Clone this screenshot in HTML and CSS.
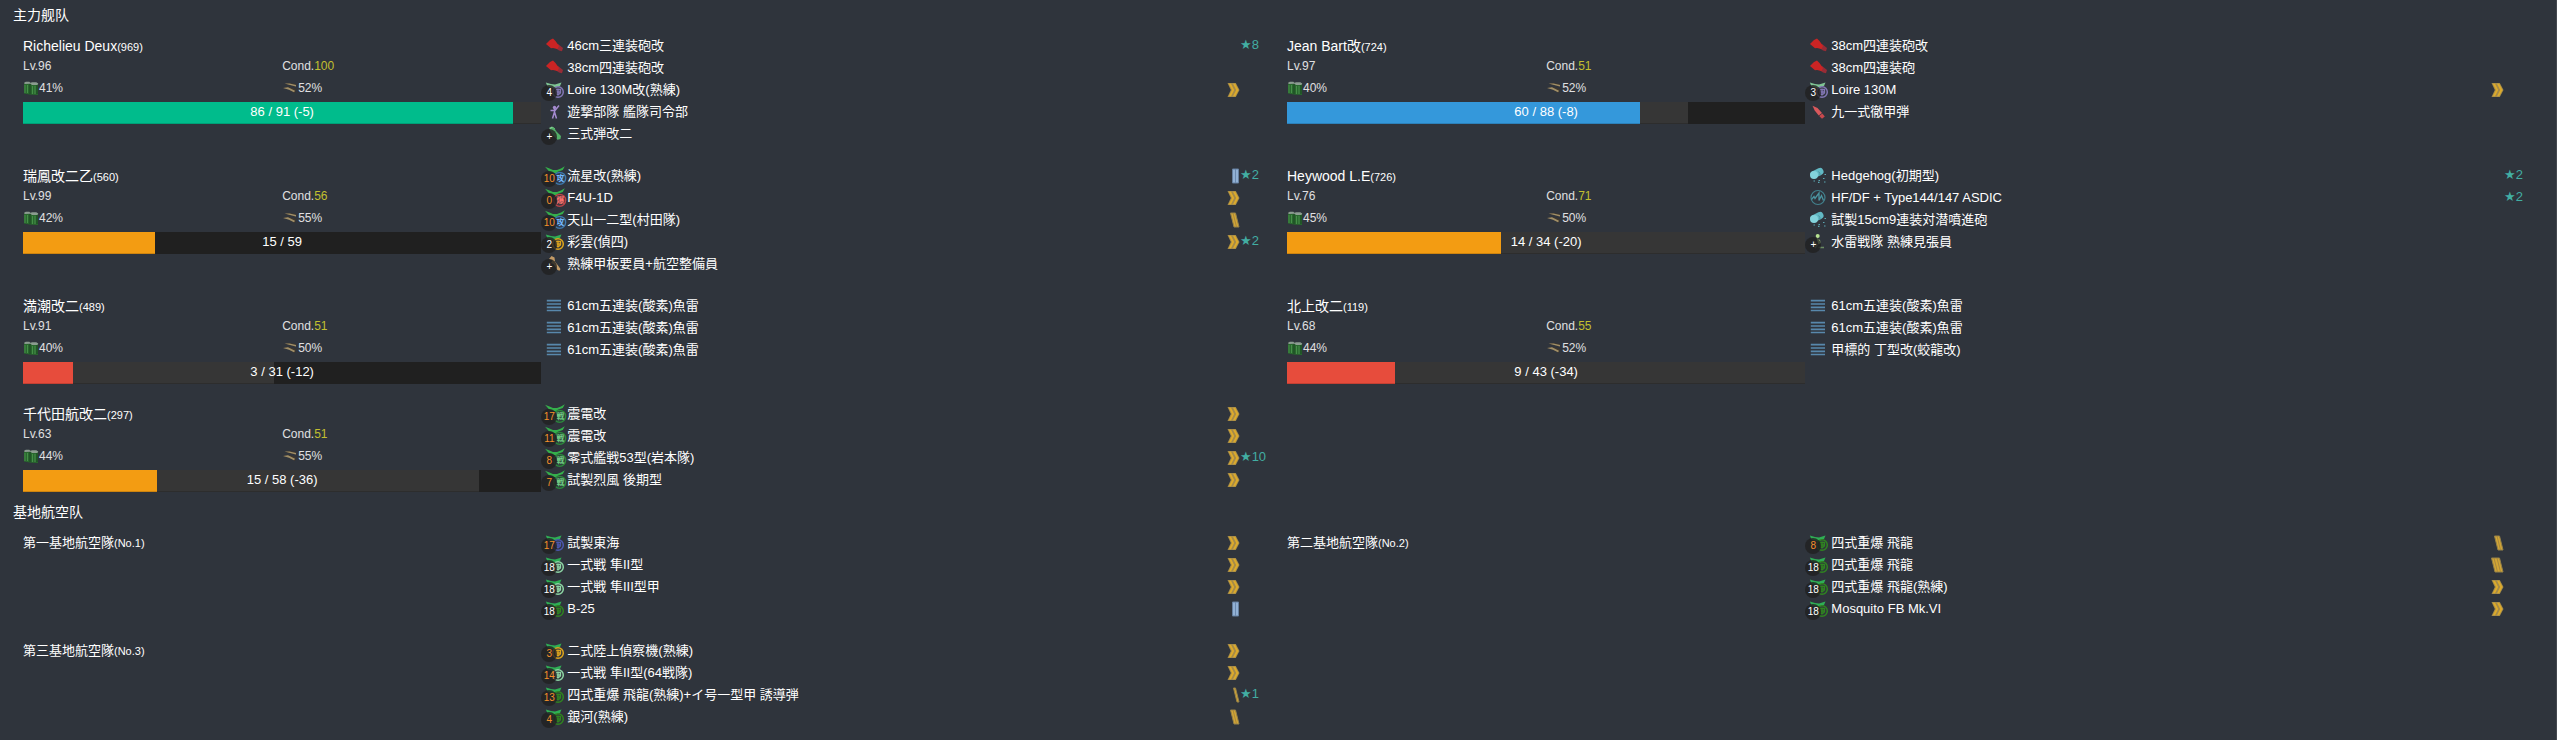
FILE: index.html
```html
<!DOCTYPE html>
<html lang="ja">
<head>
<meta charset="utf-8">
<meta name="viewport" content="width=device-width, initial-scale=1">
<title>主力舰队</title>
<link rel="stylesheet" href="styles.css">
</head>
<body>
<svg class="sprite" aria-hidden="true">
  <symbol id="gun" viewBox="0 0 20 20"><path d="M9 11l5 3.500 3 .7 1-3.200-5-4z" fill="#962c36"/><path d="M1 8l4-4 3-1.500 2.500 2.500 3.500 5-1.500 3L8 12l-2 .3z" fill="#cb2424"/></symbol>
  <symbol id="command" viewBox="0 0 20 20"><circle cx="9.500" cy="5.500" r="1.700" fill="#a58bd0"/><path d="M9.500 7v4M5.500 8.500H10L14 3.500M9.500 10l-2 6.500M9.500 10l2 6.500" fill="none" stroke="#a58bd0" stroke-width="1.500"/></symbol>
  <symbol id="shell" viewBox="0 0 20 20"><path d="M4 4l3-1.500 3 2-1.500 4z" fill="#83cf92"/><path d="M4.500 5.500l4-2.500 3 4.500 4.500 4.500-.5 3-3 .8-5-5z" fill="#54b068"/></symbol>
  <symbol id="ap" viewBox="0 0 20 20"><path d="M3.500 3.800l5 2.200 4.500 5-3.300 2.500-4-5z" fill="#d9585c"/><path d="M13.300 11.400l2.500 3-2.800 2.300-2.800-2.600z" fill="#c8484d"/></symbol>
  <symbol id="crew" viewBox="0 0 20 20"><path d="M4 5l2.500-3 3 1.500.5 4 3 4 2.500 3.500-1 1.700-2-.7-4-6-2.500-1 1.500-2.500z" fill="#c29a66"/></symbol>
  <symbol id="asw" viewBox="0 0 20 20"><path d="M5 8.500l6-3" stroke="#62b9c4" stroke-width="7" stroke-linecap="round"/><circle cx="5" cy="9" r="4" fill="#83d3dc"/><path d="M9.500 5.500a4 4 0 0 1 1.500 4" fill="none" stroke="#4a94a0"/><path d="M15.500 8.500h1.500M14 12.500h1.500M9.500 14.500H11M4.500 15h1.500M9 16.300h1.500M15 16h1.500" stroke="#5ba6b2" stroke-width="1.200"/></symbol>
  <symbol id="sonar" viewBox="0 0 20 20"><circle cx="9" cy="9.500" r="7" fill="none" stroke="#42818d" stroke-width="1.200"/><path d="M2.500 11.500L5 8.500l1 2L10 5v7.500l2.500-5 2 5" fill="none" stroke="#4b95a1" stroke-width="1.300"/></symbol>
  <symbol id="lookout" viewBox="0 0 20 20"><circle cx="8.700" cy="4" r="2" fill="#b7e391"/><path d="M7.500 6l3.500 2 .5 3-2 1.500z" fill="#b7e391"/><path d="M5 10l3 3-2 3M9.500 15.500H15" stroke="#6b8b63" stroke-width="1.500" fill="none"/></symbol>
  <symbol id="torpedo" viewBox="0 0 20 20"><path d="M1.800 4.700h14.200M1.800 8h14.200M1.800 11.300h14.200M1.800 14.500h14.200" stroke="#5888ac" stroke-width="1.700"/></symbol>
  <symbol id="landwing" viewBox="0 0 20 20"><path d="M.8 2.500L6 4l4 .5 6.500-2-1.500 3.500-4 1.500-2 1.200-3-1.200-3.500-1z" fill="currentColor"/></symbol>
  <symbol id="land" viewBox="0 0 20 20"><circle cx="13" cy="12" r="5.300" fill="none" stroke="currentColor" stroke-width="1.500"/><path d="M11 9.500h4.500v3.500L13 15l-2-1.500zM13 8.500V15M11 12h4" fill="none" stroke="currentColor" stroke-width="1.300"/></symbol>
  <symbol id="carrier" viewBox="0 0 22 20"><path d="M0 .8l4.500 1.700 3.500 1.500h4L16 2.500 19.800.3l-2 3.700-5 1.700-2 1.800L8 6.500 4 5.200z" fill="#35b04c"/><circle cx="14.700" cy="12.300" r="6" fill="currentColor" fill-opacity=".15" stroke="currentColor" stroke-width="1.300"/></symbol>
  <symbol id="p7" viewBox="0 0 14 16"><path d="M1.500 1H9.800L13.500 8 9.800 15H1.500L4.800 8z" fill="#a58b49"/><path d="M2.800 1.800h2.200L8.200 8 5 14.200H2.800L6 8zM7 1.800h2.200L12.500 8 9.200 14.200H7L10.200 8z" fill="#dcaa2c"/></symbol>
  <symbol id="p6" viewBox="0 0 14 16"><path d="M1.500 1h8L13 15H5z" fill="#d2a535" stroke="#968148"/><path d="M4 1l3.500 14M7 1l3.500 14" stroke="#a8883c"/></symbol>
  <symbol id="p5" viewBox="0 0 14 16"><path d="M4.500 1h5L13 15H8z" fill="#d2a535" stroke="#968148"/><path d="M7 1l3.500 14" stroke="#a8883c"/></symbol>
  <symbol id="p4" viewBox="0 0 14 16"><path d="M7.500 1h2L13 15h-2z" fill="#d2a535" stroke="#968148"/></symbol>
  <symbol id="p2" viewBox="0 0 14 16"><path d="M6.500 1h6v14h-6z" fill="#92b1d5" stroke="#657f9f"/><path d="M9.500 1v14" stroke="#6b89ae"/></symbol>
  <symbol id="fuel" viewBox="0 0 16 14"><path d="M1 2.500v10l4 .8 4 .4 6 .2V3z" fill="#28702c"/><path d="M2 4v8M4.500 4v8M9.500 5v8M12 5v8" stroke="#4aa04b"/><path d="M7 3v10M14 4v9" stroke="#174b1d"/><path d="M.8 2l2-1.200h3.500l1 1 2-.6h4l2 1.300-1 1.500H9L7.500 2.800 2 3z" fill="#9caf9f"/></symbol>
  <symbol id="ammo" viewBox="0 0 16 14"><path d="M1 7l5 1 7 4 1-4-7-2zM3 3l4-1 7 1v3L8 4z" fill="#43382a"/><path d="M1 7l5-.7 7 3.500-1 1.500-5-2.500zM2.500 2.500h5L14 4v1.500L8 4z" fill="#b5a070"/></symbol>
</svg>
<main class="page">
<section>
  <h2 class="title">主力舰队</h2>
  <div class="fleet">
    <article class="card">
      <div class="info">
        <h3 class="name">Richelieu Deux<small>(969)</small></h3>
        <div class="stats"><span>Lv.96</span><span>Cond.<b>100</b></span><span class="supply"><svg><use href="#fuel"/></svg>41%</span><span class="supply"><svg><use href="#ammo"/></svg>52%</span></div>
        <div class="hp"><i class="green" style="width:94.5%"></i><i class="lost" style="width:5.5%"></i><span>86 / 91 (-5)</span></div>
      </div>
      <ul class="equips">
        <li><span class="icon"><svg><use href="#gun"/></svg></span><span class="item">46cm三連装砲改</span><span class="star">★8</span></li>
        <li><span class="icon"><svg><use href="#gun"/></svg></span><span class="item">38cm四連装砲改</span></li>
        <li><span class="icon seaplane"><svg><use class="seawing" href="#landwing"/><use href="#land"/></svg><em class="full">4</em></span><span class="item">Loire 130M改(熟練)</span><svg class="rank"><use href="#p7"/></svg></li>
        <li><span class="icon"><svg><use href="#command"/></svg></span><span class="item">遊撃部隊 艦隊司令部</span></li>
        <li><span class="icon"><svg><use href="#shell"/></svg><em class="full">+</em></span><span class="item">三式弾改二</span></li>
      </ul>
    </article>
    <article class="card">
      <div class="info">
        <h3 class="name">Jean Bart改<small>(724)</small></h3>
        <div class="stats"><span>Lv.97</span><span>Cond.<b>51</b></span><span class="supply"><svg><use href="#fuel"/></svg>40%</span><span class="supply"><svg><use href="#ammo"/></svg>52%</span></div>
        <div class="hp"><i class="blue" style="width:68.2%"></i><i class="lost" style="width:9.1%"></i><span>60 / 88 (-8)</span></div>
      </div>
      <ul class="equips">
        <li><span class="icon"><svg><use href="#gun"/></svg></span><span class="item">38cm四連装砲改</span></li>
        <li><span class="icon"><svg><use href="#gun"/></svg></span><span class="item">38cm四連装砲</span></li>
        <li><span class="icon seaplane"><svg><use class="seawing" href="#landwing"/><use href="#land"/></svg><em class="full">3</em></span><span class="item">Loire 130M</span><svg class="rank"><use href="#p7"/></svg></li>
        <li><span class="icon"><svg><use href="#ap"/></svg></span><span class="item">九一式徹甲弾</span></li>
      </ul>
    </article>
    <article class="card">
      <div class="info">
        <h3 class="name">瑞鳳改二乙<small>(560)</small></h3>
        <div class="stats"><span>Lv.99</span><span>Cond.<b>56</b></span><span class="supply"><svg><use href="#fuel"/></svg>42%</span><span class="supply"><svg><use href="#ammo"/></svg>55%</span></div>
        <div class="hp"><i class="orange" style="width:25.4%"></i><span>15 / 59</span></div>
      </div>
      <ul class="equips">
        <li><span class="icon attacker"><svg class="wide"><use href="#carrier"/></svg><b class="kind">攻</b><em>10</em></span><span class="item">流星改(熟練)</span><svg class="rank"><use href="#p2"/></svg><span class="star">★2</span></li>
        <li><span class="icon bomber"><svg class="wide"><use href="#carrier"/></svg><b class="kind">爆</b><em>0</em></span><span class="item">F4U-1D</span><svg class="rank"><use href="#p7"/></svg></li>
        <li><span class="icon attacker"><svg class="wide"><use href="#carrier"/></svg><b class="kind">攻</b><em>10</em></span><span class="item">天山一二型(村田隊)</span><svg class="rank"><use href="#p5"/></svg></li>
        <li><span class="icon recon"><svg><use class="wing" href="#landwing"/><use href="#land"/></svg><em class="full">2</em></span><span class="item">彩雲(偵四)</span><svg class="rank"><use href="#p7"/></svg><span class="star">★2</span></li>
        <li><span class="icon"><svg><use href="#crew"/></svg><em class="full">+</em></span><span class="item">熟練甲板要員+航空整備員</span></li>
      </ul>
    </article>
    <article class="card">
      <div class="info">
        <h3 class="name">Heywood L.E<small>(726)</small></h3>
        <div class="stats"><span>Lv.76</span><span>Cond.<b>71</b></span><span class="supply"><svg><use href="#fuel"/></svg>45%</span><span class="supply"><svg><use href="#ammo"/></svg>50%</span></div>
        <div class="hp"><i class="orange" style="width:41.2%"></i><i class="lost" style="width:58.8%"></i><span>14 / 34 (-20)</span></div>
      </div>
      <ul class="equips">
        <li><span class="icon"><svg><use href="#asw"/></svg></span><span class="item">Hedgehog(初期型)</span><span class="star">★2</span></li>
        <li><span class="icon"><svg><use href="#sonar"/></svg></span><span class="item">HF/DF + Type144/147 ASDIC</span><span class="star">★2</span></li>
        <li><span class="icon"><svg><use href="#asw"/></svg></span><span class="item">試製15cm9連装対潜噴進砲</span></li>
        <li><span class="icon"><svg><use href="#lookout"/></svg><em class="full">+</em></span><span class="item">水雷戦隊 熟練見張員</span></li>
      </ul>
    </article>
    <article class="card">
      <div class="info">
        <h3 class="name">満潮改二<small>(489)</small></h3>
        <div class="stats"><span>Lv.91</span><span>Cond.<b>51</b></span><span class="supply"><svg><use href="#fuel"/></svg>40%</span><span class="supply"><svg><use href="#ammo"/></svg>50%</span></div>
        <div class="hp"><i class="red" style="width:9.7%"></i><i class="lost" style="width:38.7%"></i><span>3 / 31 (-12)</span></div>
      </div>
      <ul class="equips">
        <li><span class="icon"><svg><use href="#torpedo"/></svg></span><span class="item">61cm五連装(酸素)魚雷</span></li>
        <li><span class="icon"><svg><use href="#torpedo"/></svg></span><span class="item">61cm五連装(酸素)魚雷</span></li>
        <li><span class="icon"><svg><use href="#torpedo"/></svg></span><span class="item">61cm五連装(酸素)魚雷</span></li>
      </ul>
    </article>
    <article class="card">
      <div class="info">
        <h3 class="name">北上改二<small>(119)</small></h3>
        <div class="stats"><span>Lv.68</span><span>Cond.<b>55</b></span><span class="supply"><svg><use href="#fuel"/></svg>44%</span><span class="supply"><svg><use href="#ammo"/></svg>52%</span></div>
        <div class="hp"><i class="red" style="width:20.9%"></i><i class="lost" style="width:79.1%"></i><span>9 / 43 (-34)</span></div>
      </div>
      <ul class="equips">
        <li><span class="icon"><svg><use href="#torpedo"/></svg></span><span class="item">61cm五連装(酸素)魚雷</span></li>
        <li><span class="icon"><svg><use href="#torpedo"/></svg></span><span class="item">61cm五連装(酸素)魚雷</span></li>
        <li><span class="icon"><svg><use href="#torpedo"/></svg></span><span class="item">甲標的 丁型改(蛟龍改)</span></li>
      </ul>
    </article>
    <article class="card">
      <div class="info">
        <h3 class="name">千代田航改二<small>(297)</small></h3>
        <div class="stats"><span>Lv.63</span><span>Cond.<b>51</b></span><span class="supply"><svg><use href="#fuel"/></svg>44%</span><span class="supply"><svg><use href="#ammo"/></svg>55%</span></div>
        <div class="hp"><i class="orange" style="width:25.9%"></i><i class="lost" style="width:62.1%"></i><span>15 / 58 (-36)</span></div>
      </div>
      <ul class="equips">
        <li><span class="icon fighter"><svg class="wide"><use href="#carrier"/></svg><b class="kind">戦</b><em>17</em></span><span class="item">震電改</span><svg class="rank"><use href="#p7"/></svg></li>
        <li><span class="icon fighter"><svg class="wide"><use href="#carrier"/></svg><b class="kind">戦</b><em>11</em></span><span class="item">震電改</span><svg class="rank"><use href="#p7"/></svg></li>
        <li><span class="icon fighter"><svg class="wide"><use href="#carrier"/></svg><b class="kind">戦</b><em>8</em></span><span class="item">零式艦戦53型(岩本隊)</span><svg class="rank"><use href="#p7"/></svg><span class="star">★10</span></li>
        <li><span class="icon fighter"><svg class="wide"><use href="#carrier"/></svg><b class="kind">戦</b><em>7</em></span><span class="item">試製烈風 後期型</span><svg class="rank"><use href="#p7"/></svg></li>
      </ul>
    </article>
  </div>
</section>
<section>
  <h2 class="title">基地航空队</h2>
  <div class="fleet">
    <article class="card">
      <h3 class="name base">第一基地航空隊<small>(No.1)</small></h3>
      <ul class="equips">
        <li><span class="icon patrol"><svg><use class="wing" href="#landwing"/><use href="#land"/></svg><em>17</em></span><span class="item">試製東海</span><svg class="rank"><use href="#p7"/></svg></li>
        <li><span class="icon army"><svg><use class="wing" href="#landwing"/><use href="#land"/></svg><em class="full">18</em></span><span class="item">一式戦 隼II型</span><svg class="rank"><use href="#p7"/></svg></li>
        <li><span class="icon army"><svg><use class="wing" href="#landwing"/><use href="#land"/></svg><em class="full">18</em></span><span class="item">一式戦 隼III型甲</span><svg class="rank"><use href="#p7"/></svg></li>
        <li><span class="icon heavy"><svg><use class="wing" href="#landwing"/><use href="#land"/></svg><em class="full">18</em></span><span class="item">B-25</span><svg class="rank"><use href="#p2"/></svg></li>
      </ul>
    </article>
    <article class="card">
      <h3 class="name base">第二基地航空隊<small>(No.2)</small></h3>
      <ul class="equips">
        <li><span class="icon heavy"><svg><use class="wing" href="#landwing"/><use href="#land"/></svg><em>8</em></span><span class="item">四式重爆 飛龍</span><svg class="rank"><use href="#p5"/></svg></li>
        <li><span class="icon heavy"><svg><use class="wing" href="#landwing"/><use href="#land"/></svg><em class="full">18</em></span><span class="item">四式重爆 飛龍</span><svg class="rank"><use href="#p6"/></svg></li>
        <li><span class="icon heavy"><svg><use class="wing" href="#landwing"/><use href="#land"/></svg><em class="full">18</em></span><span class="item">四式重爆 飛龍(熟練)</span><svg class="rank"><use href="#p7"/></svg></li>
        <li><span class="icon heavy"><svg><use class="wing" href="#landwing"/><use href="#land"/></svg><em class="full">18</em></span><span class="item">Mosquito FB Mk.VI</span><svg class="rank"><use href="#p7"/></svg></li>
      </ul>
    </article>
    <article class="card">
      <h3 class="name base">第三基地航空隊<small>(No.3)</small></h3>
      <ul class="equips">
        <li><span class="icon recon"><svg><use class="wing" href="#landwing"/><use href="#land"/></svg><em>3</em></span><span class="item">二式陸上偵察機(熟練)</span><svg class="rank"><use href="#p7"/></svg></li>
        <li><span class="icon army"><svg><use class="wing" href="#landwing"/><use href="#land"/></svg><em>14</em></span><span class="item">一式戦 隼II型(64戦隊)</span><svg class="rank"><use href="#p7"/></svg></li>
        <li><span class="icon heavy"><svg><use class="wing" href="#landwing"/><use href="#land"/></svg><em>13</em></span><span class="item">四式重爆 飛龍(熟練)+イ号一型甲 誘導弾</span><svg class="rank"><use href="#p4"/></svg><span class="star">★1</span></li>
        <li><span class="icon heavy"><svg><use class="wing" href="#landwing"/><use href="#land"/></svg><em>4</em></span><span class="item">銀河(熟練)</span><svg class="rank"><use href="#p5"/></svg></li>
      </ul>
    </article>
  </div>
</section>
</main>
</body>
</html>
```
FILE: styles.css
```css
* { box-sizing: border-box; }

body {
  margin: 0;
  background: #2f343c;
  color: #fff;
  font: 13px/20px "Liberation Sans", "Noto Sans CJK JP", "Noto Sans CJK SC", sans-serif;
}

.sprite { position: absolute; width: 0; height: 0; }

.page {
  min-height: 100vh;
  padding: 5px 15px 0 13px;
  border-right: 1px solid #454950;
}

.title {
  margin: 0;
  font-size: 14px;
  font-weight: normal;
  line-height: 21px;
}

.fleet { display: grid; grid-template-columns: 1fr 1fr; }

.card {
  display: grid;
  grid-template-columns: 5fr 7fr;
  align-items: start;
  padding: 10px;
}

.name {
  margin: 0;
  font-size: 14px;
  font-weight: normal;
  line-height: 20px;
}
.name small { font-size: 11px; line-height: 1; }
.base { font-size: 13px; }

.stats {
  display: grid;
  grid-template-columns: 1fr 1fr;
  grid-template-rows: 20px 24px;
  align-items: center;
  margin-bottom: 2px;
  font-size: 12px;
  opacity: .85;
}
.stats b { color: #dcd82e; font-weight: normal; }
.supply { display: flex; align-items: center; }
.supply svg { width: 16px; height: 14px; }

.hp {
  position: relative;
  display: flex;
  height: 22px;
  background: #202020;
}
.hp i { box-shadow: inset 0 -1px rgba(0, 0, 0, .15); }
.hp span {
  position: absolute;
  inset: 0;
  text-align: center;
}
.green { background: #00bc8c; }
.blue { background: #3498db; }
.orange { background: #f39c12; }
.red { background: #e74c3c; }
.lost { background: #363636; }

.equips {
  margin: 0;
  padding: 0 0 0 4px;
  list-style: none;
}
.equips li {
  display: grid;
  grid-template-columns: 20px 1fr 14px 27px;
  height: 22px;
}
.icon { position: relative; width: 20px; height: 20px; }
.icon svg { display: block; width: 20px; height: 20px; }
.icon .wide { width: 22px; }
.icon em {
  position: absolute;
  top: 5px;
  left: -4px;
  width: 16px;
  height: 16px;
  border-radius: 50%;
  background: rgba(33, 33, 33, .8);
  color: #f5912a;
  font: 10px/16px "Liberation Sans", sans-serif;
  text-align: center;
}
.icon .full { color: #fff; }
.kind {
  position: absolute;
  top: 8px;
  left: 11px;
  font: bold 8px/8px "Noto Sans CJK JP", sans-serif;
}
.item { padding-left: 2px; }
.rank { grid-column: 3; width: 14px; height: 16px; margin-top: 2px; }
.star {
  grid-column: 4;
  color: #42aea3;
  font-family: "Liberation Sans", "DejaVu Sans", sans-serif;
  line-height: 18px;
  white-space: nowrap;
}

.wing { color: #2fae55; }
.seawing { color: #7fc494; }
.seaplane { color: #8377b5; }
.recon { color: #dfa51c; }
.patrol { color: #4b57b0; }
.army { color: #8ed6a5; }
.heavy { color: #2f8420; }
.fighter { color: #2b8a3c; }
.attacker { color: #3e78ad; }
.bomber { color: #bc4549; }
.fighter .kind { color: #72cf86; }
.attacker .kind { color: #72b8ff; }
.bomber .kind { color: #ff7470; }
```
